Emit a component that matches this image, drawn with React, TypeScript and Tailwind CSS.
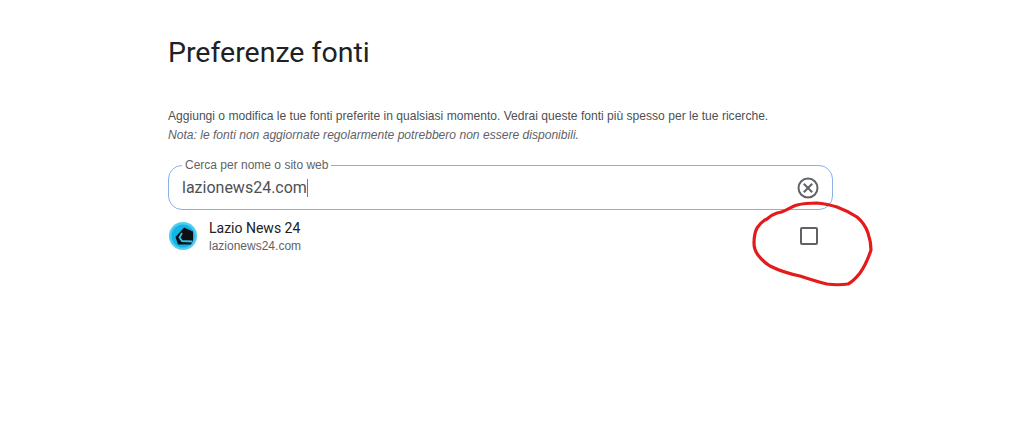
const sans = "font-['Liberation_Sans',Arial,sans-serif]"
const roboto = "font-['Roboto',Arial,sans-serif]"

function SourceLogo() {
  return (
    <svg width="28" height="28" viewBox="0 0 28 28" className="shrink-0">
      <circle cx="14" cy="14" r="14" fill="#4fcdf0" />
      <circle cx="14" cy="14" r="11.5" fill="#12b4e6" />
      <path d="M15 5.5L24 9.5L24 18L22 22.5L9 22.5L6.5 15Z" fill="#0c1014" />
      <path d="M13 11L10.5 15.5L13 19L23 19.5" fill="none" stroke="#2cc0ea" strokeWidth="1.8" />
    </svg>
  )
}

function ClearIcon() {
  return (
    <svg width="22" height="22" viewBox="0 0 22 22" fill="none" stroke="#5f6368" strokeWidth="2" className="shrink-0">
      <circle cx="11" cy="11" r="9.5" />
      <path d="M6.8 6.8L15.2 15.2M15.2 6.8L6.8 15.2" />
    </svg>
  )
}

export default function App() {
  return (
    <div className={`relative h-[435px] w-[1024px] overflow-hidden bg-white ${sans}`}>
      <div className="w-[665px] ml-[168px] pt-[35px]">
        <h1 className={`${roboto} text-[28.5px] leading-[36px] text-[#202124]`}>Preferenze fonti</h1>

        <p className="mt-[36px] text-[12.08px] leading-[18px] text-[#4d5156]">
          Aggiungi o modifica le tue fonti preferite in qualsiasi momento. Vedrai queste fonti più spesso per le tue ricerche.
        </p>
        <p className="mt-[1px] text-[12.08px] leading-[18px] italic text-[#5f6368]">
          Nota: le fonti non aggiornate regolarmente potrebbero non essere disponibili.
        </p>

        <fieldset className="mt-[14px] h-[52px] rounded-[14px] border border-[#8ab0e8] pl-[13px] pr-[13px]">
          <legend className="px-[3px] text-[12px] leading-[14px] text-[#5f6368]">Cerca per nome o sito web</legend>
          <div className="flex items-center justify-between pt-[4px]">
            <div className="flex items-center">
              <span className={`${roboto} text-[16px] leading-[24px] text-[#4d5156]`}>lazionews24.com</span>
              <span className="h-[18px] w-px bg-[#4a7fd6]" />
            </div>
            <ClearIcon />
          </div>
        </fieldset>

        <div className="mt-[8px] flex items-center justify-between pl-px pr-[14px]">
          <div className="flex items-center gap-[12px]">
            <SourceLogo />
            <div>
              <div className={`${roboto} text-[14px] leading-[20px] text-[#202124]`}>Lazio News 24</div>
              <div className="text-[12px] leading-[16px] text-[#5f6368]">lazionews24.com</div>
            </div>
          </div>
          <div className="mr-[1px] size-[18px] rounded-[2px] border-2 border-[#5f6368]" />
        </div>
      </div>

      {/* segno a mano sopra lo screenshot */}
      <svg className="absolute left-[740px] top-[195px]" width="140" height="100" viewBox="740 195 140 100" fill="none">
        <path
          d="M767 219C770 216 774 214 777 213C785 212 790 207 797 205C805 203 811 203 817 203C825 204 831 205 837 207C845 210 851 213 857 217C863 222 866 227 868 233C870 239 871 245 871 250C868 259 865 266 860 273C856 278 852 282 848 284C841 285 834 285 827 284C818 282 809 279 800 276C790 274 778 270 770 266C765 263 761 259 758 255C755 251 754 247 754 243C754 237 755 232 757 228C759 225 762 221 767 219Z"
          stroke="#e31b1b"
          strokeWidth="3.2"
          strokeLinejoin="round"
        />
      </svg>
    </div>
  )
}
